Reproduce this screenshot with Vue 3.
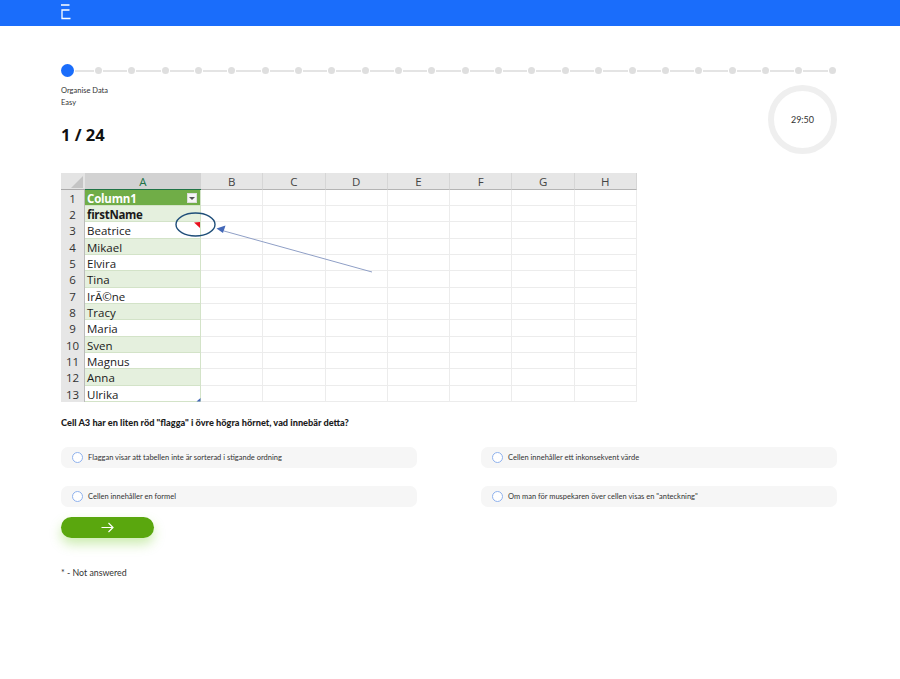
<script setup>
const dots = Array.from({ length: 23 })
const cols = ['B', 'C', 'D', 'E', 'F', 'G', 'H']
const rows = [
  { n: 1, head: true, text: 'Column1' },
  { n: 2, text: 'firstName', bold: true, band: true },
  { n: 3, text: 'Beatrice' },
  { n: 4, text: 'Mikael', band: true },
  { n: 5, text: 'Elvira' },
  { n: 6, text: 'Tina', band: true },
  { n: 7, text: 'IrÃ©ne'.replace('é', '©') },
  { n: 8, text: 'Tracy', band: true },
  { n: 9, text: 'Maria' },
  { n: 10, text: 'Sven', band: true },
  { n: 11, text: 'Magnus' },
  { n: 12, text: 'Anna', band: true },
  { n: 13, text: 'Ulrika' }
]
const options = [
  'Flaggan visar att tabellen inte är sorterad i stigande ordning',
  'Cellen innehåller ett inkonsekvent värde',
  'Cellen innehåller en formel',
  'Om man för muspekaren över cellen visas en "anteckning"'
]
</script>

<template>
  <div class="page">
    <header class="topbar">
      <svg class="logo" width="10" height="16" viewBox="0 0 10 16">
        <path d="M0 1h8.500M8.500 6H1v8.500h8.500" fill="none" stroke="#fff" stroke-width="1.300" />
      </svg>
    </header>

    <main class="content">
      <div class="stepper">
        <span class="current"></span>
        <template v-for="(d, i) in dots" :key="i">
          <span class="line" :class="{ short: i === 0 }"></span>
          <span class="dot"></span>
        </template>
      </div>

      <div class="meta">
        <div>
          <p class="label">Organise Data</p>
          <p class="label">Easy</p>
          <h1 class="count">1 / 24</h1>
        </div>
        <div class="timer">29:50</div>
      </div>

      <div class="sheet">
        <div class="grid">
          <div class="corner"><span></span></div>
          <div class="colhead active">A</div>
          <div v-for="c in cols" :key="c" class="colhead">{{ c }}</div>
          <template v-for="r in rows" :key="r.n">
            <div class="rowhead">{{ r.n }}</div>
            <div class="cell-a" :class="{ head: r.head, band: r.band, bold: r.bold }">
              {{ r.text }}
              <span v-if="r.head" class="filter"></span>
            </div>
            <div v-for="c in cols" :key="c" class="cell"></div>
          </template>
        </div>
        <svg class="overlay" width="576" height="229" viewBox="0 0 576 229">
          <path d="M133 49.500l6-.5v6z" fill="#e8101c" />
          <ellipse cx="134.500" cy="51.500" rx="19.500" ry="11.500" fill="none" stroke="#1f4e79" stroke-width="1.400" />
          <path d="M311 99L163 58" stroke="#8f9fc6" stroke-width="1" fill="none" />
          <path d="M155.500 55.500l9-3-2.500 7.500z" fill="#4468b8" />
          <path d="M139.500 228.500h-4l4-3.500z" fill="#4468b8" />
        </svg>
      </div>

      <p class="question">Cell A3 har en liten röd "flagga" i övre högra hörnet, vad innebär detta?</p>

      <div class="options">
        <label v-for="o in options" :key="o" class="option">
          <span class="radio"></span>
          <span>{{ o }}</span>
        </label>
      </div>

      <button class="next" type="button">
        <svg width="13" height="11" viewBox="0 0 13 11">
          <path d="M.5 5.500h11.500M7.500 1l4.500 4.500L7.500 10" fill="none" stroke="#fff" stroke-width="1.200" />
        </svg>
      </button>

      <p class="note">* - Not answered</p>
    </main>
  </div>
</template>

<style>
html, body { margin: 0; background: #fff; }
</style>

<style scoped>
.page {
  height: 679px;
  overflow: hidden;
  font-family: "Lato", "Noto Sans", sans-serif;
  color: #222;
}
.topbar {
  height: 26px;
  background: #1a6dfb;
  padding-left: 61px;
  display: flex;
  align-items: flex-start;
  padding-top: 4px;
  box-sizing: border-box;
}
.content { padding: 38px 63px 0 61px; }
.stepper { display: flex; align-items: center; height: 13px; padding-right: 1.500px; }
.current {
  flex: none;
  width: 13px;
  height: 13px;
  border-radius: 50%;
  background: #1a6dfb;
}
.line { flex: 1; height: 2px; margin: 0 1px; background: #e4e4e4; }
.line.short { flex: none; width: 19px; }
.dot {
  flex: none;
  width: 7px;
  height: 7px;
  border-radius: 50%;
  background: #dfdfdf;
}
.meta {
  display: flex;
  justify-content: space-between;
  align-items: flex-start;
  margin-top: 8px;
  height: 88px;
}
.label { margin: 0; font-size: 7.500px; line-height: 12px; color: #333; }
.count {
  margin: 14px 0 0;
  font-family: "Noto Sans", sans-serif;
  font-size: 16.500px;
  line-height: 24px;
  font-weight: 700;
  color: #111;
}
.timer {
  width: 69px;
  height: 69px;
  box-sizing: border-box;
  border: 6px solid #efefef;
  border-radius: 50%;
  display: flex;
  align-items: center;
  justify-content: center;
  font-size: 9px;
  color: #333;
}
.sheet { position: relative; width: 576px; height: 229px; }
.grid {
  display: grid;
  grid-template-columns: 24px 116px repeat(7, minmax(0, 1fr));
  grid-template-rows: 16.500px repeat(13, minmax(0, 1fr));
  height: 229px;
  font-family: "Open Sans", "Noto Sans", sans-serif;
}
.grid > div { box-sizing: border-box; min-height: 0; }
.corner { background: #e4e4e4; position: relative; overflow: hidden; border-bottom: 1px solid #aaa; }
.corner span {
  position: absolute;
  right: 2px;
  bottom: 1px;
  width: 0;
  height: 0;
  border-left: 12px solid transparent;
  border-bottom: 12px solid #c4c4c4;
}
.colhead {
  background: #e6e6e6;
  border-bottom: 1px solid #b4b4b4;
  border-right: 1px solid #d6d6d6;
  font-size: 11.500px;
  line-height: 17px;
  text-align: center;
  color: #444;
}
.colhead.active {
  background: #d2d2d2;
  color: #217346;
  border-bottom: 1.500px solid #217346;
  border-right: 0;
}
.rowhead {
  background: #e6e6e6;
  border-right: 1px solid #bbb;
  font-size: 11.500px;
  line-height: 17px;
  text-align: center;
  color: #333;
}
.cell-a {
  position: relative;
  padding-left: 2px;
  font-size: 11.500px;
  line-height: 17px;
  color: #1a1a1a;
  background: #fff;
  border-bottom: 1px solid #d3e3c8;
  border-right: 1px solid #d3e3c8;
  white-space: nowrap;
}
.cell-a.band { background: #e5f0de; }
.cell-a.bold { font-weight: 700; letter-spacing: -.3px; }
.cell-a.head { background: #70ad47; color: #fff; font-weight: 700; letter-spacing: -.2px; }
.filter {
  position: absolute;
  right: 3px;
  top: 3px;
  width: 10px;
  height: 10px;
  background: #f6f6f6;
  border: 1px solid #ddd;
  box-sizing: border-box;
}
.filter::after {
  content: "";
  position: absolute;
  left: 1px;
  top: 3px;
  border-left: 3px solid transparent;
  border-right: 3px solid transparent;
  border-top: 3px solid #555;
}
.cell { border-right: 1px solid #ececec; border-bottom: 1px solid #ececec; }
.overlay { position: absolute; left: 0; top: 0; pointer-events: none; }
.question {
  margin: 15px 0 0;
  font-size: 9.200px;
  line-height: 12px;
  font-weight: 900;
  color: #1c1c1c;
}
.options {
  display: grid;
  grid-template-columns: 356px 356px;
  column-gap: 64px;
  row-gap: 18px;
  margin-top: 18px;
}
.option {
  height: 21px;
  border-radius: 7px;
  background: #f6f6f6;
  display: flex;
  align-items: center;
  gap: 5px;
  padding-left: 11px;
  font-size: 7.500px;
  color: #333;
}
.radio {
  width: 9px;
  height: 9px;
  border: 1px solid #8fb2ee;
  border-radius: 50%;
  background: #fff;
  flex: none;
}
.next {
  display: flex;
  align-items: center;
  justify-content: center;
  width: 93px;
  height: 21px;
  margin: 10px 0 0;
  padding: 0;
  border: 0;
  border-radius: 11px;
  background: #5aa70e;
  box-shadow: 0 6px 12px rgba(110, 200, 30, .35);
}
.note { margin: 29px 0 0; font-size: 8.800px; line-height: 12px; color: #333; }
</style>
